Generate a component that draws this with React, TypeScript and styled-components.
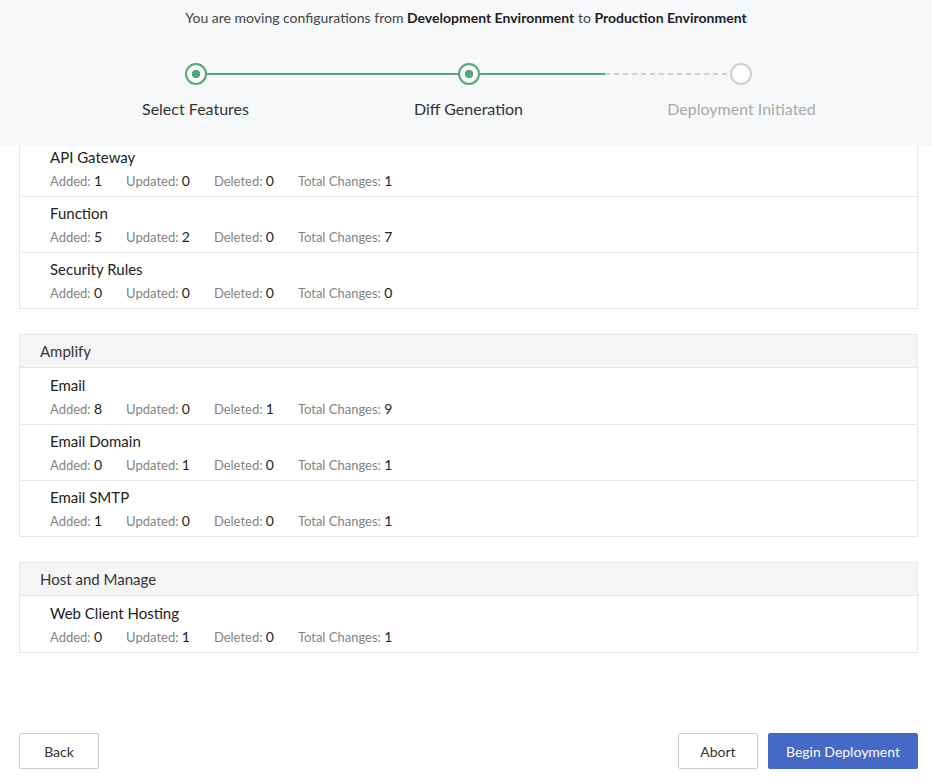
import React from "react";
import styled, {createGlobalStyle} from "styled-components";

const GlobalStyle = createGlobalStyle`
  html, body {
    margin: 0;
    padding: 0;
    background: #ffffff;
  }
  body {
    font-family: Lato, "Open Sans", "Liberation Sans", sans-serif;
    color: #333;
  }
  * {
    box-sizing: border-box;
  }
`

type Stat = { added: number, updated: number, deleted: number }
type Feature = { name: string } & Stat
type Group = { title?: string, features: Feature[] }

const GREEN = '#57a678'

const groups: Group[] = [
    {
        features: [
            {name: 'API Gateway', added: 1, updated: 0, deleted: 0},
            {name: 'Function', added: 5, updated: 2, deleted: 0},
            {name: 'Security Rules', added: 0, updated: 0, deleted: 0},
        ]
    },
    {
        title: 'Amplify',
        features: [
            {name: 'Email', added: 8, updated: 0, deleted: 1},
            {name: 'Email Domain', added: 0, updated: 1, deleted: 0},
            {name: 'Email SMTP', added: 1, updated: 0, deleted: 0},
        ]
    },
    {
        title: 'Host and Manage',
        features: [
            {name: 'Web Client Hosting', added: 0, updated: 1, deleted: 0},
        ]
    },
]

const steps = [
    {label: 'Select Features', done: true},
    {label: 'Diff Generation', done: true},
    {label: 'Deployment Initiated', done: false},
]

const App = () => {
    return (
        <Page>
            <GlobalStyle/>
            <Header>
                <Intro>
                    You are moving configurations from <b>Development Environment</b> to <b>Production Environment</b>
                </Intro>
                <Track>
                    <Dot active/>
                    <Line/>
                    <Dot active/>
                    <Line half/>
                    <Dashed/>
                    <Dot/>
                </Track>
                <Labels>
                    {steps.map(s => <Label key={s.label} muted={!s.done}>{s.label}</Label>)}
                </Labels>
            </Header>
            <Scroller>
                <List>
                    {groups.map((g, i) => (
                        <Card key={i} continued={!g.title}>
                            {g.title ? <CardHead>{g.title}</CardHead> : null}
                            {g.features.map(f => (
                                <Row key={f.name}>
                                    <Name>{f.name}</Name>
                                    <Stats>
                                        <span>Added: <Num>{f.added}</Num></span>
                                        <span>Updated: <Num>{f.updated}</Num></span>
                                        <span>Deleted: <Num>{f.deleted}</Num></span>
                                        <span>Total Changes: <Num>{f.added + f.updated + f.deleted}</Num></span>
                                    </Stats>
                                </Row>
                            ))}
                        </Card>
                    ))}
                </List>
            </Scroller>
            <Footer>
                <Button>Back</Button>
                <Spacer/>
                <Button>Abort</Button>
                <Button primary>Begin Deployment</Button>
            </Footer>
        </Page>
    )
}

const Page = styled.div`
  height: 783px;
  display: flex;
  flex-direction: column;
`
const Header = styled.div`
  height: 145px;
  flex-shrink: 0;
  background: #f7f8f9;
  padding-top: 9px;
  position: relative;
  z-index: 1;
`
const Intro = styled.div`
  text-align: center;
  font-size: 14px;
  line-height: 18px;
  color: #444;
  b {
    font-weight: 700;
    color: #222;
  }
`
const Track = styled.div`
  display: flex;
  align-items: center;
  margin: 36px 0 0 185px;
  height: 22px;
`
const Dot = styled.div<{ active?: boolean }>`
  width: 22px;
  height: 22px;
  border-radius: 50%;
  flex-shrink: 0;
  border: 2px solid ${p => p.active ? GREEN : '#cfcfcf'};
  background: ${p => p.active ? `radial-gradient(circle, ${GREEN} 0 4px, #f7f8f9 4.5px)` : '#fff'};
`
const Line = styled.div<{ half?: boolean }>`
  width: ${p => p.half ? 125 : 251}px;
  height: 2px;
  background: ${GREEN};
`
const Dashed = styled.div`
  width: 125px;
  height: 2px;
  background: repeating-linear-gradient(90deg, #cfcfcf 0 5px, transparent 5px 9px);
`
const Labels = styled.div`
  display: grid;
  grid-template-columns: repeat(3, 273px);
  margin: 14px 0 0 59px;
`
const Label = styled.div<{ muted?: boolean }>`
  text-align: center;
  font-size: 16px;
  line-height: 20px;
  color: ${p => p.muted ? '#a9a9a9' : '#333'};
`
const Scroller = styled.div`
  flex: 1;
  overflow: hidden;
`
const List = styled.div`
  display: flex;
  flex-direction: column;
  gap: 25px;
  margin: -5px 14px 0 19px;
`
const Card = styled.div<{ continued?: boolean }>`
  border: 1px solid #e7e7e7;
  border-top: ${p => p.continued ? 'none' : '1px solid #e7e7e7'};
  background: #fff;
`
const CardHead = styled.div`
  height: 33px;
  padding-left: 20px;
  display: flex;
  align-items: center;
  font-size: 15px;
  color: #333;
  background: #f5f5f6;
  border-bottom: 1px solid #e7e7e7;
`
const Row = styled.div`
  height: 56px;
  padding: 7px 0 0 30px;
  & + & {
    padding-top: 6px;
    border-top: 1px solid #e9e9e9;
  }
`
const Name = styled.div`
  font-size: 15px;
  line-height: 20px;
  color: #222;
`
const Stats = styled.div`
  display: flex;
  gap: 24px;
  margin-top: 4px;
  font-size: 13px;
  line-height: 20px;
  color: #838383;
`
const Num = styled.span`
  font-size: 14px;
  color: #222;
`
const Footer = styled.div`
  display: flex;
  gap: 10px;
  padding: 0 14px 14px 19px;
`
const Spacer = styled.div`
  flex: 1;
`
const Button = styled.button<{ primary?: boolean }>`
  height: 36px;
  min-width: 80px;
  padding: 0 17px;
  font-family: inherit;
  font-size: 14px;
  border-radius: 2px;
  cursor: pointer;
  border: 1px solid ${p => p.primary ? '#4469c6' : '#cdcdcd'};
  background: ${p => p.primary ? '#4469c6' : '#fff'};
  color: ${p => p.primary ? '#fff' : '#333'};
`

export default App
